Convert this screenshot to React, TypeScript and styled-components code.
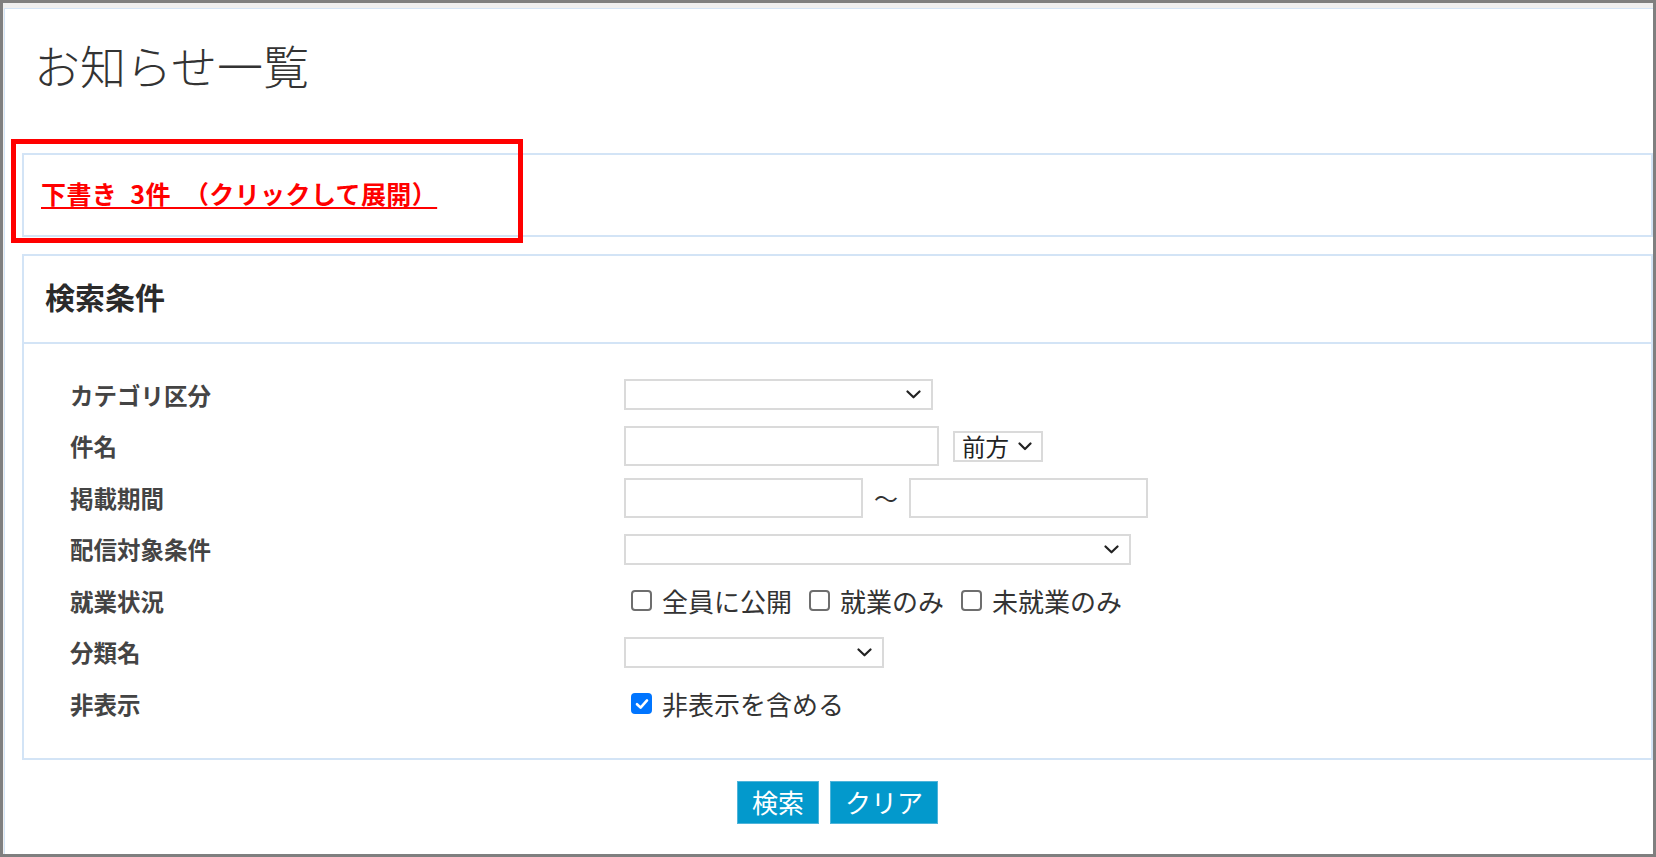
import styled, { createGlobalStyle } from "styled-components";

const GlobalStyle = createGlobalStyle`
  html, body {
    margin: 0;
    padding: 0;
    background: #ffffff;
    overflow: hidden;
  }

  body {
    font-family: "Noto Sans CJK JP", "Noto Sans", sans-serif;
    color: #333333;
  }
`;

const PANEL_BORDER = "#d3e4f6";
const FIELD_BORDER = "#dadada";

const Chevron = ({ small }: { small?: boolean }) =>
  small ? (
    <svg width="14" height="9" viewBox="0 0 14 9" aria-hidden="true">
      <polyline
        points="1.5,1.5 7,7 12.5,1.5"
        fill="none"
        stroke="#222"
        strokeWidth="2.2"
        strokeLinecap="round"
        strokeLinejoin="round"
      />
    </svg>
  ) : (
    <svg width="15" height="9" viewBox="0 0 15 9" aria-hidden="true">
      <polyline
        points="1.5,1.5 7.5,7.3 13.5,1.5"
        fill="none"
        stroke="#222"
        strokeWidth="2.2"
        strokeLinecap="round"
        strokeLinejoin="round"
      />
    </svg>
  );

const CheckMark = () => (
  <svg width="14" height="12" viewBox="0 0 14 12" aria-hidden="true">
    <polyline
      points="2,6.2 5.6,9.6 12,2.4"
      fill="none"
      stroke="#fff"
      strokeWidth="2.6"
      strokeLinecap="round"
      strokeLinejoin="round"
    />
  </svg>
);

interface CheckProps {
  label: string;
  checked?: boolean;
}

const Check = ({ label, checked }: CheckProps) => (
  <CheckItem>
    <CheckBox $checked={checked}>{checked && <CheckMark />}</CheckBox>
    <CheckText>{label}</CheckText>
  </CheckItem>
);

interface SelectProps {
  width: number;
  value?: string;
}

const Select = ({ width, value }: SelectProps) => (
  <SelectBox $width={width} $compact={!!value}>
    {value && <SelectValue>{value}</SelectValue>}
    <Chevron small={!!value} />
  </SelectBox>
);

const App = () => {
  return (
    <>
      <GlobalStyle />
      <Frame>
        <Page>
          <Title>お知らせ一覧</Title>

          <DraftSection>
            <DraftPanel>
              <DraftLink href="#">下書き 3件 （クリックして展開）</DraftLink>
            </DraftPanel>
            <Highlight />
          </DraftSection>

          <SearchPanel>
            <SearchHeader>検索条件</SearchHeader>
            <SearchBody>
              <Label>カテゴリ区分</Label>
              <Field>
                <Select width={309} />
              </Field>

              <Label>件名</Label>
              <Field $gap={14}>
                <TextInput $width={315} />
                <Select width={90} value="前方" />
              </Field>

              <Label>掲載期間</Label>
              <Field $gap={11}>
                <TextInput $width={239} />
                <Tilde>～</Tilde>
                <TextInput $width={239} />
              </Field>

              <Label>配信対象条件</Label>
              <Field>
                <Select width={507} />
              </Field>

              <Label>就業状況</Label>
              <Field>
                <CheckGroup>
                  <Check label="全員に公開" />
                  <Check label="就業のみ" />
                  <Check label="未就業のみ" />
                </CheckGroup>
              </Field>

              <Label>分類名</Label>
              <Field>
                <Select width={260} />
              </Field>

              <Label>非表示</Label>
              <Field>
                <CheckGroup>
                  <Check label="非表示を含める" checked />
                </CheckGroup>
              </Field>
            </SearchBody>
          </SearchPanel>

          <ButtonRow>
            <ActionButton type="button">検索</ActionButton>
            <ActionButton type="button">クリア</ActionButton>
          </ButtonRow>
        </Page>
      </Frame>
    </>
  );
};

const Frame = styled.div`
  display: flex;
  flex-direction: column;

  width: 1656px;
  height: 857px;
  box-sizing: border-box;

  padding: 5px 0 0 1px;
  border: 3px solid #7f7f7f;
  background: #efefef;
`;

const Page = styled.main`
  flex: 1;
  min-height: 0;

  padding-left: 17px;
  border-top: 1px solid ${PANEL_BORDER};
  border-left: 1px solid ${PANEL_BORDER};
  background: #ffffff;
`;

const Title = styled.h1`
  margin: 27px 0 0 12px;

  font-size: 46px;
  font-weight: 300;
  line-height: 56px;
  color: #333333;
`;

const DraftSection = styled.section`
  position: relative;
  margin-top: 61px;
`;

const DraftPanel = styled.div`
  height: 30px;
  padding: 23px 0 27px 17px;
  border: 2px solid ${PANEL_BORDER};

  font-size: 25px;
  line-height: 30px;
`;

const DraftLink = styled.a`
  font-weight: 700;
  letter-spacing: 0.4px;
  word-spacing: 7px;
  white-space: nowrap;
  color: #ff0000;
  text-decoration: underline;
  text-underline-offset: 3px;
  text-decoration-thickness: 2px;
`;

const Highlight = styled.div`
  position: absolute;
  left: -11px;
  top: -14px;

  width: 512px;
  height: 104px;
  box-sizing: border-box;

  border: 5px solid #ff0000;
  pointer-events: none;
`;

const SearchPanel = styled.section`
  margin-top: 17px;
  border: 2px solid ${PANEL_BORDER};
`;

const SearchHeader = styled.h2`
  margin: 0;
  padding: 22px 0 28px 21px;
  border-bottom: 2px solid ${PANEL_BORDER};

  font-size: 30px;
  font-weight: 700;
  line-height: 36px;
  color: #2b2b2b;
`;

const SearchBody = styled.div`
  display: grid;
  grid-template-columns: 554px 1fr;
  grid-auto-rows: 51.5px;
  align-items: center;

  padding: 25px 0 28px 46px;
`;

const Label = styled.div`
  font-size: 23.5px;
  font-weight: 700;
  line-height: 30px;
  color: #444444;
`;

const Field = styled.div<{ $gap?: number }>`
  display: flex;
  align-items: center;
  gap: ${({ $gap }) => $gap ?? 0}px;
`;

const TextInput = styled.input.attrs({ type: "text" })<{ $width: number }>`
  flex-shrink: 0;
  width: ${({ $width }) => $width}px;
  height: 40px;
  box-sizing: border-box;
  margin: 0;

  border: 2px solid ${FIELD_BORDER};
  background: #ffffff;
  outline: none;
`;

const SelectBox = styled.div<{ $width: number; $compact: boolean }>`
  display: flex;
  flex-shrink: 0;
  align-items: center;
  justify-content: ${({ $compact }) => ($compact ? "flex-start" : "flex-end")};
  gap: 9px;

  width: ${({ $width }) => $width}px;
  height: 31px;
  box-sizing: border-box;

  padding: ${({ $compact }) => ($compact ? "0 5px 0 7px" : "0 10px 0 0")};
  border: 2px solid ${FIELD_BORDER};
  background: #ffffff;
`;

const SelectValue = styled.span`
  white-space: nowrap;
  font-size: 23.5px;
  line-height: 27px;
  color: #222222;
`;

const Tilde = styled.span`
  font-size: 24px;
  line-height: 30px;
  color: #333333;
`;

const CheckGroup = styled.div`
  display: flex;
  align-items: center;
  gap: 17px;
  margin-left: 7px;
`;

const CheckItem = styled.label`
  display: inline-flex;
  align-items: center;
  gap: 10px;
`;

const CheckBox = styled.span<{ $checked?: boolean }>`
  display: inline-flex;
  align-items: center;
  justify-content: center;

  width: 21px;
  height: 21px;
  box-sizing: border-box;

  border: ${({ $checked }) => ($checked ? "none" : "2px solid #6e6e6e")};
  border-radius: 4px;
  background: ${({ $checked }) => ($checked ? "#0075ff" : "#ffffff")};
`;

const CheckText = styled.span`
  white-space: nowrap;
  font-size: 26px;
  line-height: 32px;
  color: #333333;
`;

const ButtonRow = styled.div`
  display: flex;
  justify-content: center;
  gap: 11px;
  margin-top: 21px;
`;

const ActionButton = styled.button`
  height: 43px;
  padding: 0 14px;

  border: 1px solid #4fb4da;
  background: #0399cc;

  font-family: inherit;
  font-size: 26px;
  line-height: 32px;
  color: #ffffff;
  cursor: pointer;
`;

export default App;
